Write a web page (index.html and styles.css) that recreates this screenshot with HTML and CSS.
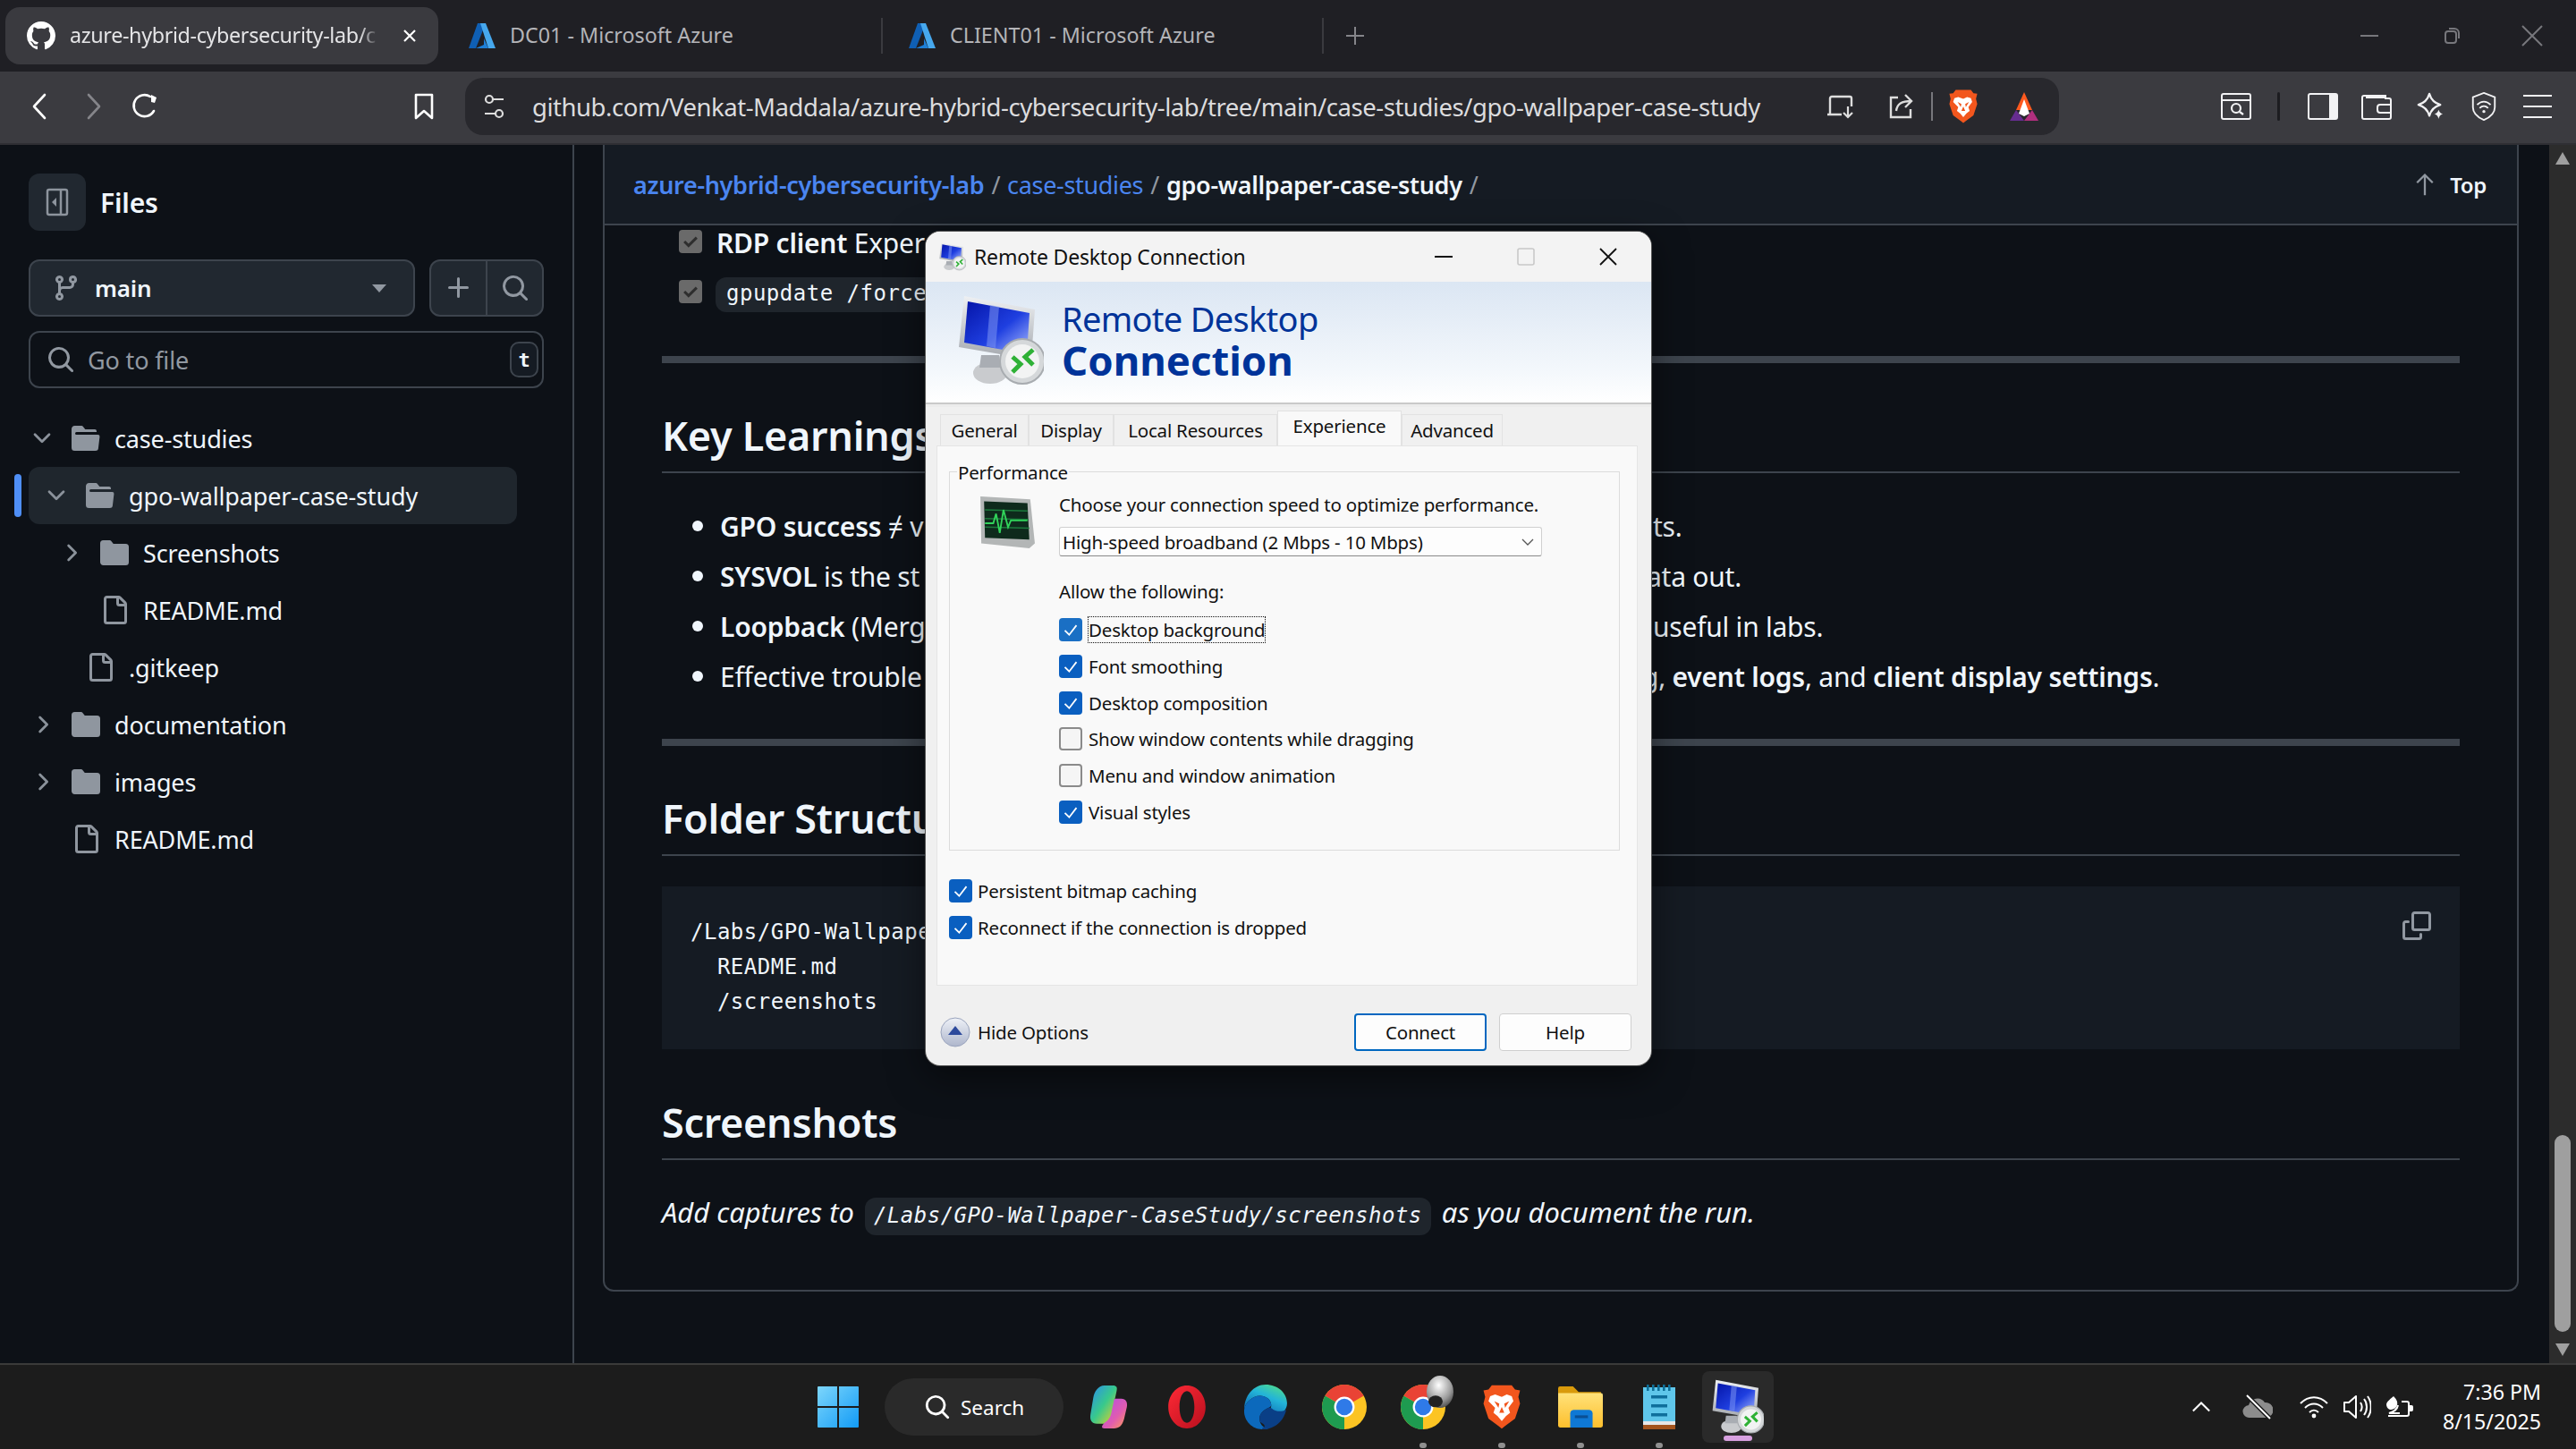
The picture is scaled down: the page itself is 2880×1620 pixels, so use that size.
FILE: index.html
```html
<!DOCTYPE html>
<html lang="en">

<head>
    <meta charset="UTF-8">
    <title>gpo-wallpaper-case-study</title>
    <link rel="stylesheet" href="styles.css">
</head>

<body>
    <svg class="sprite" xmlns="http://www.w3.org/2000/svg">
        <defs>
            <linearGradient id="g-win" x1="0" y1="0" x2="1" y2="1">
                <stop offset="0" stop-color="#7dd6fc"></stop>
                <stop offset="1" stop-color="#129bf5"></stop>
            </linearGradient>
            <linearGradient id="g-opera" x1="0" y1="0" x2="1" y2="1">
                <stop offset="0" stop-color="#ff2a36"></stop>
                <stop offset="1" stop-color="#b80f1e"></stop>
            </linearGradient>
            <linearGradient id="g-edge" x1="0.8" y1="0" x2="0.2" y2="1">
                <stop offset="0" stop-color="#4fdc8c"></stop>
                <stop offset="0.4" stop-color="#23b4d8"></stop>
                <stop offset="1" stop-color="#0b5fb0"></stop>
            </linearGradient>
            <linearGradient id="g-screen" x1="0" y1="0" x2="1" y2="1">
                <stop offset="0" stop-color="#0414a8"></stop>
                <stop offset="0.55" stop-color="#1f3fe0"></stop>
                <stop offset="1" stop-color="#aebfff"></stop>
            </linearGradient>
            <linearGradient id="g-frame" x1="0" y1="0" x2="0" y2="1">
                <stop offset="0" stop-color="#eef0f3"></stop>
                <stop offset="1" stop-color="#a4a8ae"></stop>
            </linearGradient>
            <linearGradient id="g-folder" x1="0" y1="0" x2="0" y2="1">
                <stop offset="0" stop-color="#ffe27a"></stop>
                <stop offset="1" stop-color="#fdbf2d"></stop>
            </linearGradient>
            <linearGradient id="g-copilot" x1="0" y1="0" x2="1" y2="1">
                <stop offset="0" stop-color="#2a8cf0"></stop>
                <stop offset="0.5" stop-color="#38c98c"></stop>
                <stop offset="1" stop-color="#f5d020"></stop>
            </linearGradient>
            <linearGradient id="g-copilot2" x1="0" y1="0" x2="1" y2="1">
                <stop offset="0" stop-color="#b04fe8"></stop>
                <stop offset="0.6" stop-color="#e05cb0"></stop>
                <stop offset="1" stop-color="#ffa050"></stop>
            </linearGradient>
            <radialGradient id="g-ball" cx="0.45" cy="0.3" r="0.8">
                <stop offset="0" stop-color="#fff"></stop>
                <stop offset="0.6" stop-color="#9a9a9a"></stop>
                <stop offset="1" stop-color="#333"></stop>
            </radialGradient>
            <linearGradient id="g-hide" x1="0" y1="0" x2="0" y2="1">
                <stop offset="0" stop-color="#eef1f7"></stop>
                <stop offset="1" stop-color="#aeb6cc"></stop>
            </linearGradient>

            <symbol id="i-github" viewBox="0 0 16 16"><path fill="#fff" d="M8 0c4.42 0 8 3.58 8 8a8.013 8.013 0 0 1-5.45 7.59c-.4.08-.55-.17-.55-.38 0-.27.01-1.13.01-2.2 0-.75-.25-1.23-.54-1.48 1.78-.2 3.65-.88 3.65-3.95 0-.88-.31-1.59-.82-2.15.08-.2.36-1.02-.08-2.12 0 0-.67-.22-2.2.82-.64-.18-1.32-.27-2-.27-.68 0-1.36.09-2 .27-1.53-1.03-2.2-.82-2.2-.82-.44 1.1-.16 1.92-.08 2.12-.51.56-.82 1.28-.82 2.15 0 3.06 1.86 3.75 3.64 3.95-.23.2-.44.55-.51 1.07-.46.21-1.61.55-2.33-.66-.15-.24-.6-.83-1.23-.82-.67.01-.27.38.01.53.34.19.73.9.82 1.13.16.45.68 1.31 2.69.94 0 .67.01 1.3.01 1.49 0 .21-.15.45-.55.38A7.995 7.995 0 0 1 0 8c0-4.42 3.58-8 8-8Z"></path></symbol>
            <symbol id="i-azure" viewBox="0 0 32 32"><path fill="#0f5fb4" d="M11 2h9L9 30H1z"></path><path fill="#46a8ee" d="M20 2l11 28h-8L14 2z"></path><path fill="#1e7fd6" d="M18 19l5 11H9l9-4z"></path></symbol>
            <symbol id="i-folder" viewBox="0 0 16 16"><path fill="currentColor" d="M1.75 1A1.75 1.75 0 0 0 0 2.75v10.5C0 14.216.784 15 1.75 15h12.5A1.75 1.75 0 0 0 16 13.25v-8.5A1.75 1.75 0 0 0 14.25 3H7.5a.25.25 0 0 1-.2-.1l-.9-1.2C6.07 1.26 5.55 1 5 1H1.75Z"></path></symbol>
            <symbol id="i-folder-open" viewBox="0 0 16 16"><path fill="currentColor" d="M.513 1.513A1.75 1.75 0 0 1 1.75 1h3.5c.55 0 1.07.26 1.4.7l.9 1.2a.25.25 0 0 0 .2.1H13a1 1 0 0 1 1 1v.5H2.75a.75.75 0 0 0 0 1.5h11.978a1 1 0 0 1 .994 1.117L15 13.25A1.75 1.75 0 0 1 13.25 15H1.75A1.75 1.75 0 0 1 0 13.25V2.75c0-.464.184-.91.513-1.237Z"></path></symbol>
            <symbol id="i-file" viewBox="0 0 16 16"><path fill="currentColor" d="M2 1.75C2 .784 2.784 0 3.75 0h6.586c.464 0 .909.184 1.237.513l2.914 2.914c.329.328.513.773.513 1.237v9.586A1.75 1.75 0 0 1 13.25 16h-9.5A1.75 1.75 0 0 1 2 14.25Zm1.75-.25a.25.25 0 0 0-.25.25v12.5c0 .138.112.25.25.25h9.5a.25.25 0 0 0 .25-.25V6h-2.75A1.75 1.75 0 0 1 9 4.25V1.5Zm6.75.062V4.25c0 .138.112.25.25.25h2.688l-.011-.013-2.914-2.914-.013-.011Z"></path></symbol>
            <symbol id="i-down" viewBox="0 0 16 16"><path fill="currentColor" d="M12.78 5.22a.749.749 0 0 1 0 1.06l-4.25 4.25a.749.749 0 0 1-1.06 0L3.22 6.28a.749.749 0 1 1 1.06-1.06L8 8.939l3.72-3.719a.749.749 0 0 1 1.06 0Z"></path></symbol>
            <symbol id="i-right" viewBox="0 0 16 16"><path fill="currentColor" d="M6.22 3.22a.75.75 0 0 1 1.06 0l4.25 4.25a.75.75 0 0 1 0 1.06l-4.25 4.25a.751.751 0 0 1-1.042-.018.751.751 0 0 1-.018-1.042L9.94 8 6.22 4.28a.75.75 0 0 1 0-1.06Z"></path></symbol>
            <symbol id="i-branch" viewBox="0 0 16 16"><path fill="currentColor" d="M9.5 3.25a2.25 2.25 0 1 1 3 2.122V6A2.5 2.5 0 0 1 10 8.5H6a1 1 0 0 0-1 1v1.128a2.251 2.251 0 1 1-1.5 0V5.372a2.25 2.25 0 1 1 1.5 0v1.836A2.493 2.493 0 0 1 6 7h4a1 1 0 0 0 1-1v-.628A2.25 2.25 0 0 1 9.5 3.25Zm-6 0a.75.75 0 1 0 1.5 0 .75.75 0 0 0-1.5 0Zm8.25-.75a.75.75 0 1 0 0 1.5.75.75 0 0 0 0-1.5ZM4.25 12a.75.75 0 1 0 0 1.5.75.75 0 0 0 0-1.5Z"></path></symbol>
            <symbol id="i-search" viewBox="0 0 16 16"><path fill="currentColor" d="M10.68 11.74a6 6 0 0 1-7.922-8.982 6 6 0 0 1 8.982 7.922l3.04 3.04a.749.749 0 0 1-.326 1.275.749.749 0 0 1-.734-.215ZM11.5 7a4.499 4.499 0 1 0-8.997 0A4.499 4.499 0 0 0 11.5 7Z"></path></symbol>
            <symbol id="i-plus" viewBox="0 0 16 16"><path fill="currentColor" d="M7.75 2a.75.75 0 0 1 .75.75V7h4.25a.75.75 0 0 1 0 1.5H8.5v4.25a.75.75 0 0 1-1.5 0V8.5H2.75a.75.75 0 0 1 0-1.5H7V2.75A.75.75 0 0 1 7.75 2Z"></path></symbol>
            <symbol id="i-copy" viewBox="0 0 16 16"><path fill="currentColor" d="M0 6.75C0 5.784.784 5 1.75 5h1.5a.75.75 0 0 1 0 1.5h-1.5a.25.25 0 0 0-.25.25v7.5c0 .138.112.25.25.25h7.5a.25.25 0 0 0 .25-.25v-1.5a.75.75 0 0 1 1.5 0v1.5A1.75 1.75 0 0 1 9.25 16h-7.5A1.75 1.75 0 0 1 0 14.25Z"></path><path fill="currentColor" d="M5 1.75C5 .784 5.784 0 6.75 0h7.5C15.216 0 16 .784 16 1.75v7.5A1.75 1.75 0 0 1 14.25 11h-7.5A1.75 1.75 0 0 1 5 9.25Zm1.75-.25a.25.25 0 0 0-.25.25v7.5c0 .138.112.25.25.25h7.5a.25.25 0 0 0 .25-.25v-7.5a.25.25 0 0 0-.25-.25Z"></path></symbol>
            <symbol id="i-panel" viewBox="0 0 32 32"><rect x="5" y="2" width="22" height="28" rx="2" fill="none" stroke="#8d949d" stroke-width="2.5"></rect><path d="M20 2v28" stroke="#8d949d" stroke-width="2.5"></path><path d="M15 11v10l-5-5z" fill="#8d949d"></path></symbol>

            <symbol id="i-brave" viewBox="0 0 48 56"><path fill="#f2561d" d="M12 2h24l4 5 6 1-2 8 2 8-6 18-12 9-4 3-4-3-12-9-6-18 2-8-2-8 6-1z"></path><path fill="#fff" d="M24 16l6-3 6 2 2 6-6 8 2 6-5 4-5 6-5-6-5-4 2-6-8-8 2-6 6-2z"></path><path fill="#f2561d" d="M15 21l6 3-1 5zM33 21l-6 3 1 5zM24 28l3 7h-6z"></path></symbol>
            <symbol id="i-bat" viewBox="0 0 36 32"><path fill="#ff5a1f" d="M18 0l9 20H9z"></path><path fill="#b12f7e" d="M27 20l7 12H18z"></path><path fill="#662d91" d="M9 20L2 32h16z"></path><path fill="#fff" d="M18 8l6 16-6 3-6-3z"></path></symbol>
            <symbol id="i-chrome" viewBox="0 0 48 48"><circle cx="24" cy="24" r="24" fill="#fcc423"></circle><path fill="#e94335" d="M24 24L3.2 12A24 24 0 0 1 44.8 12z"></path><path fill="#1e9b50" d="M24 24L3.2 12A24 24 0 0 0 24 48z"></path><circle cx="24" cy="24" r="11" fill="#fff"></circle><circle cx="24" cy="24" r="8.8" fill="#2f7ae8"></circle></symbol>
            <symbol id="i-rdp" viewBox="0 0 96 100"><ellipse cx="36" cy="86" rx="19" ry="12" fill="#c9cbce"></ellipse><path fill="#a9adb3" d="M26 66h20l2 14H24z"></path><path fill="url(#g-frame)" d="M7 0l79 15-4 56L1 57z"></path><path fill="url(#g-screen)" d="M11 6l69 13-3 46L7 52z"></path><path fill="#7c93f2" opacity="0.55" d="M36 10l10 2-4 46-10-2z"></path><circle cx="72" cy="73" r="25" fill="#d5d8da" stroke="#a8acb0" stroke-width="2"></circle><circle cx="72" cy="73" r="19" fill="#f2f3f3"></circle><path d="M61 68l9 8-9 9M84 60l-9 8 9 9" fill="none" stroke="#2fb136" stroke-width="5"></path></symbol>
        </defs>
    </svg>

    <div class="app">
        <div class="tabbar">
            <div class="tab tab-active">
                <svg class="tab-icon"><use href="#i-github"></use></svg>
                <span class="tab-title">azure-hybrid-cybersecurity-lab/c</span>
                <svg class="tab-close" viewBox="0 0 16 16"><path d="M2 2l12 12M14 2L2 14" stroke="#fff" stroke-width="2.2"></path></svg>
            </div>
            <div class="tab tab-dim">
                <svg class="tab-icon"><use href="#i-azure"></use></svg>
                <span class="tab-title">DC01 - Microsoft Azure</span>
            </div>
            <div class="tab tab-dim tab-last">
                <svg class="tab-icon"><use href="#i-azure"></use></svg>
                <span class="tab-title">CLIENT01 - Microsoft Azure</span>
            </div>
            <svg class="new-tab" viewBox="0 0 24 24"><path d="M12 2v20M2 12h20" stroke="#85858a" stroke-width="2"></path></svg>
            <div class="win-controls">
                <svg class="win-min" viewBox="0 0 20 20"><path d="M0 10h20" stroke="#77777c" stroke-width="2"></path></svg>
                <svg class="win-max" viewBox="0 0 20 20"><rect x="3" y="5" width="12" height="13" rx="3" fill="none" stroke="#77777c" stroke-width="2"></rect><path d="M7 2h6a5 5 0 0 1 5 5v6" fill="none" stroke="#77777c" stroke-width="2"></path></svg>
                <svg class="win-close" viewBox="0 0 24 24"><path d="M1 1l22 22M23 1L1 23" stroke="#77777c" stroke-width="2"></path></svg>
            </div>
        </div>

        <div class="toolbar">
            <div class="nav-btn nav-first"><svg viewBox="0 0 32 32"><path d="M21 3L9 16l12 13" fill="none" stroke="#fff" stroke-width="2.6" stroke-linecap="round" stroke-linejoin="round"></path></svg></div>
            <div class="nav-btn"><svg viewBox="0 0 32 32"><path d="M11 3l12 13-12 13" fill="none" stroke="#85858a" stroke-width="2.6" stroke-linecap="round" stroke-linejoin="round"></path></svg></div>
            <div class="nav-btn"><svg viewBox="0 0 32 32"><path d="M25 21a12 12 0 1 1-4-16" fill="none" stroke="#fff" stroke-width="2.6" stroke-linecap="round"></path><path d="M22 3v8l4 1 2-6z" fill="#fff"></path></svg></div>
            <div class="nav-btn nav-bookmark"><svg viewBox="0 0 32 32"><path d="M7 3h18v26l-9-8-9 8z" fill="none" stroke="#fff" stroke-width="2.6" stroke-linejoin="round"></path></svg></div>

            <div class="address">
                <svg class="addr-tune" viewBox="0 0 24 32"><circle cx="7" cy="8" r="4" fill="none" stroke="#ddd" stroke-width="2.2"></circle><path d="M11 8h12M2 24h12" stroke="#ddd" stroke-width="2.2"></path><circle cx="18" cy="24" r="4" fill="none" stroke="#ddd" stroke-width="2.2"></circle></svg>
                <span class="addr-url">github.com/Venkat-Maddala/azure-hybrid-cybersecurity-lab/tree/main/case-studies/gpo-wallpaper-case-study</span>
                <div class="addr-btn"><svg viewBox="0 0 32 32"><path d="M5 24V7a2 2 0 0 1 2-2h20a2 2 0 0 1 2 2v9M2 25h16" fill="none" stroke="#ddd" stroke-width="2.4"></path><path d="M25 16v12m-5-5l5 5 5-5" fill="none" stroke="#ddd" stroke-width="2.2"></path></svg></div>
                <div class="addr-btn"><svg viewBox="0 0 32 32"><path d="M13 6H5v22h22v-9" fill="none" stroke="#ddd" stroke-width="2.4"></path><path d="M11 21c1-8 6-11 17-11M21 3l7 7-7 7" fill="none" stroke="#ddd" stroke-width="2.4"></path></svg></div>
                <i class="addr-sep"></i>
                <div class="addr-btn"><svg class="addr-brave"><use href="#i-brave"></use></svg></div>
                <div class="addr-btn"><svg class="addr-bat"><use href="#i-bat"></use></svg></div>
            </div>

            <div class="tool-right">
                <div class="tool-btn"><svg viewBox="0 0 34 30"><rect x="1" y="1" width="32" height="28" rx="2" fill="none" stroke="#f2f2f4" stroke-width="2"></rect><path d="M1 8h32" stroke="#f2f2f4" stroke-width="2"></path><circle cx="17" cy="17" r="5" fill="none" stroke="#f2f2f4" stroke-width="2.2"></circle><path d="M21 21l4 3" stroke="#f2f2f4" stroke-width="2.2"></path></svg></div>
                <i class="tool-sep"></i>
                <div class="tool-btn"><svg viewBox="0 0 34 30"><rect x="1" y="1" width="32" height="28" rx="2" fill="none" stroke="#f2f2f4" stroke-width="2"></rect><path d="M24 1h9v28h-9z" fill="#f2f2f4"></path></svg></div>
                <div class="tool-btn"><svg viewBox="0 0 34 30"><path d="M5 5h22M3 3h24v3h4a2 2 0 0 1 2 2v19a2 2 0 0 1-2 2H3a2 2 0 0 1-2-2V5a2 2 0 0 1 2-2z" fill="none" stroke="#f2f2f4" stroke-width="2"></path><path d="M33 13H21a3 3 0 0 0-3 3v3a3 3 0 0 0 3 3h12" fill="none" stroke="#f2f2f4" stroke-width="2"></path></svg></div>
                <div class="tool-btn"><svg viewBox="0 0 34 34"><path d="M16 2c2 7 6 11 13 13-7 2-11 6-13 13-2-7-6-11-13-13 7-2 11-6 13-13z" fill="none" stroke="#f2f2f4" stroke-width="2.4" stroke-linejoin="round"></path><path d="M27 21c1 3 2 4 5 5-3 1-4 2-5 6-1-4-2-5-5-6 3-1 4-2 5-5z" fill="#f2f2f4"></path></svg></div>
                <div class="tool-btn"><svg viewBox="0 0 30 34"><path d="M15 1l13 5v12c0 7-6 12-13 15C8 30 2 25 2 18V6z" fill="none" stroke="#f2f2f4" stroke-width="2"></path><path d="M7 15c5-5 11-5 16 0M10 19c3-3 7-3 10 0" fill="none" stroke="#f2f2f4" stroke-width="2"></path><circle cx="15" cy="23" r="1.8" fill="#f2f2f4"></circle></svg></div>
                <div class="tool-btn"><svg viewBox="0 0 34 30"><path d="M1 3h32M1 15h32M1 27h32" stroke="#f2f2f4" stroke-width="2.2"></path></svg></div>
            </div>
        </div>

        <div class="main">
            <aside class="sidebar">
                <div class="side-head">
                    <div class="side-toggle"><svg><use href="#i-panel"></use></svg></div>
                    <span class="side-title">Files</span>
                </div>
                <div class="branch-row">
                    <div class="branch-btn">
                        <svg class="branch-icon"><use href="#i-branch"></use></svg>
                        <span class="branch-name">main</span>
                        <i class="caret"></i>
                    </div>
                    <div class="btn-group">
                        <div class="btn-cell"><svg><use href="#i-plus"></use></svg></div>
                        <div class="btn-cell"><svg><use href="#i-search"></use></svg></div>
                    </div>
                </div>
                <div class="file-find">
                    <svg><use href="#i-search"></use></svg>
                    <span class="find-text">Go to file</span>
                    <kbd class="find-key">t</kbd>
                </div>
                <div class="tree">
                    <div class="row">
                        <svg class="chev"><use href="#i-down"></use></svg>
                        <svg class="ico"><use href="#i-folder-open"></use></svg>
                        <span>case-studies</span>
                    </div>
                    <div class="row depth-1 row-current">
                        <svg class="chev"><use href="#i-down"></use></svg>
                        <svg class="ico"><use href="#i-folder-open"></use></svg>
                        <span>gpo-wallpaper-case-study</span>
                    </div>
                    <div class="row depth-2">
                        <svg class="chev"><use href="#i-right"></use></svg>
                        <svg class="ico"><use href="#i-folder"></use></svg>
                        <span>Screenshots</span>
                    </div>
                    <div class="row depth-2">
                        <i class="chev"></i>
                        <svg class="ico"><use href="#i-file"></use></svg>
                        <span>README.md</span>
                    </div>
                    <div class="row depth-1">
                        <i class="chev"></i>
                        <svg class="ico"><use href="#i-file"></use></svg>
                        <span>.gitkeep</span>
                    </div>
                    <div class="row">
                        <svg class="chev"><use href="#i-right"></use></svg>
                        <svg class="ico"><use href="#i-folder"></use></svg>
                        <span>documentation</span>
                    </div>
                    <div class="row">
                        <svg class="chev"><use href="#i-right"></use></svg>
                        <svg class="ico"><use href="#i-folder"></use></svg>
                        <span>images</span>
                    </div>
                    <div class="row">
                        <i class="chev"></i>
                        <svg class="ico"><use href="#i-file"></use></svg>
                        <span>README.md</span>
                    </div>
                </div>
            </aside>

            <section class="card">
                <div class="crumbs">
                    <a class="crumb-link">azure-hybrid-cybersecurity-lab</a>
                    <span class="crumb-sep">/</span>
                    <a class="crumb-link crumb-plain">case-studies</a>
                    <span class="crumb-sep">/</span>
                    <strong class="crumb-here">gpo-wallpaper-case-study</strong>
                    <span class="crumb-sep">/</span>
                    <div class="top-link">
                        <svg viewBox="0 0 16 16"><path d="M8 15V2M3 7l5-5 5 5" fill="none" stroke="#9198a1" stroke-width="1.3"></path></svg>
                        <span>Top</span>
                    </div>
                </div>

                <article class="markdown">
                    <div class="task task-first">
                        <i class="task-box"><svg viewBox="0 0 16 16"><path d="M3 8l3.4 3.4L13 4.8" fill="none" stroke="#2e2e2e" stroke-width="2.2"></path></svg></i>
                        <span><strong>RDP client</strong> Exper</span>
                    </div>
                    <div class="task task-second">
                        <i class="task-box"><svg viewBox="0 0 16 16"><path d="M3 8l3.4 3.4L13 4.8" fill="none" stroke="#2e2e2e" stroke-width="2.2"></path></svg></i>
                        <code class="pill">gpupdate /force</code>
                    </div>

                    <hr class="rule">
                    <h2>Key Learnings</h2>
                    <ul class="points">
                        <li>
                            <span class="head head-a"><strong>GPO success</strong> ≠ v</span>
                            <span>ts.</span>
                        </li>
                        <li>
                            <span class="head head-b"><strong>SYSVOL</strong> is the st</span>
                            <span>ata out.</span>
                        </li>
                        <li>
                            <span class="head head-a"><strong>Loopback</strong> (Merg</span>
                            <span>useful in labs.</span>
                        </li>
                        <li>
                            <span class="head head-c">Effective trouble</span>
                            <span>g, <strong>event logs</strong>, and <strong>client display settings</strong>.</span>
                        </li>
                    </ul>

                    <hr class="rule rule-second">
                    <h2>Folder Structu</h2>
                    <div class="codeblock">
                        <pre>/Labs/GPO-Wallpape
  README.md
  /screenshots</pre>
                        <svg class="copy"><use href="#i-copy"></use></svg>
                    </div>

                    <h2 class="h2-last">Screenshots</h2>
                    <p class="note"><em>Add captures to <code class="pill pill-em">/Labs/GPO-Wallpaper-CaseStudy/screenshots</code> as you document the run.</em></p>
                </article>
            </section>

            <div class="scrollbar">
                <i class="arrow-up"></i>
                <i class="thumb"></i>
                <i class="arrow-down"></i>
            </div>
        </div>

        <div class="taskbar">
            <svg class="start" viewBox="0 0 46 46"><path fill="url(#g-win)" d="M0 1a1 1 0 0 1 1-1h21v22H0zM24 0h21a1 1 0 0 1 1 1v21H24zM0 24h22v22H1a1 1 0 0 1-1-1zM24 24h22v21a1 1 0 0 1-1 1H24z"></path></svg>
            <div class="search-pill">
                <svg><use href="#i-search"></use></svg>
                <span>Search</span>
            </div>
            <div class="task-app">
                <svg viewBox="0 0 48 48"><path fill="url(#g-copilot)" d="M20 1h9c4 0 5 2 4 6l-6 28c-1 4-5 7-9 7h-6c-6 0-8-4-7-10l3-18C9 8 13 1 20 1z"></path><path fill="url(#g-copilot2)" d="M32 15h6c5 0 7 4 6 9l-3 13c-2 7-5 10-11 10H20c-4 0-3-3 0-6 6-4 7-8 8-14l2-9c0-2 1-3 2-3z"></path></svg>
            </div>
            <div class="task-app">
                <svg viewBox="0 0 48 48"><path fill="url(#g-opera)" fill-rule="evenodd" d="M24 1c11 0 20 10 20 23S35 47 24 47 4 37 4 24 13 1 24 1zm0 6c-5 0-8 8-8 17s3 17 8 17 8-8 8-17-3-17-8-17z"></path></svg>
            </div>
            <div class="task-app">
                <svg viewBox="0 0 48 48"><path fill="url(#g-edge)" d="M24 0c13 0 23 9 23 20 0 7-5 12-12 12-4 0-7-2-7-4 0-1 2-2 2-6 0-6-6-10-12-10C10 12 2 19 1 27 1 12 11 0 24 0z"></path><path fill="#0c69bc" d="M1 27c1-8 9-15 17-15 6 0 12 4 12 10 0 1-1 2-3 3-7 3-11 8-9 15 1 3 3 6 9 8-3 1-5 0-7 0C9 48 0 38 1 27z"></path><path fill="#0a3f86" d="M18 40c-2-7 2-12 9-15 3-1 4 2 8 3 3 1 7 1 11-1-2 11-12 21-25 21-1 0-1-1 0-2 3 0 3-3-3-6z"></path></svg>
            </div>
            <div class="task-app">
                <svg><use href="#i-chrome"></use></svg>
            </div>
            <div class="task-app task-open">
                <svg><use href="#i-chrome"></use></svg>
                <svg class="ball" viewBox="0 0 30 50" preserveAspectRatio="none"><ellipse cx="15" cy="25" rx="15" ry="25" fill="url(#g-ball)"></ellipse><ellipse cx="10" cy="40" rx="8" ry="9" fill="#222"></ellipse></svg>
            </div>
            <div class="task-app task-open">
                <svg class="brave-big"><use href="#i-brave"></use></svg>
            </div>
            <div class="task-app task-open">
                <svg viewBox="0 0 48 48"><path fill="#d99a0b" d="M0 4a2 2 0 0 1 2-2h14l6 6h24v8H0z"></path><path fill="url(#g-folder)" d="M0 9h46a2 2 0 0 1 2 2v33a2 2 0 0 1-2 2H2a2 2 0 0 1-2-2z"></path><path fill="#0f78d4" d="M13 46V31a4 4 0 0 1 4-4h16a4 4 0 0 1 4 4v15z"></path><path fill="#0a4f94" d="M18 33h14v3H18z"></path></svg>
            </div>
            <div class="task-app task-open">
                <svg viewBox="0 0 36 50"><path fill="#5fc6ea" d="M0 3h36v38H0z"></path><path fill="#0e6f98" d="M4 0h2.6v7H4zM10 0h2.6v7H10zM16 0h2.6v7H16zM22 0h2.6v7H22zM28 0h2.6v7H28z"></path><path fill="#0f6f9c" d="M9 12h18v3.5H9zM9 22h18v3.5H9zM9 32h18v3.5H9z"></path><path fill="#e7e7e7" d="M0 41h36v4H0z"></path><path fill="#a4541d" d="M0 45h36v5H0z"></path></svg>
            </div>
            <div class="task-app task-current">
                <svg><use href="#i-rdp"></use></svg>
            </div>

            <div class="tray">
                <svg class="tray-chev" viewBox="0 0 24 14"><path d="M2 12l10-10 10 10" fill="none" stroke="#fff" stroke-width="2.2"></path></svg>
                <svg class="tray-cloud" viewBox="0 0 34 28"><path fill="#8c8c8c" d="M8 26a7 7 0 0 1-1-14 10 10 0 0 1 18-3 8 8 0 0 1 2 17z"></path><path d="M5 1l26 26" stroke="#1c1c1c" stroke-width="5"></path><path d="M5 1l26 26" stroke="#fff" stroke-width="2"></path></svg>
                <svg class="tray-wifi" viewBox="0 0 32 26"><path d="M1 9c9-9 21-9 30 0M6 14c6-6 14-6 20 0M11 19c3-3 7-3 10 0" fill="none" stroke="#fff" stroke-width="2"></path><circle cx="16" cy="23" r="2.4" fill="#fff"></circle></svg>
                <svg class="tray-vol" viewBox="0 0 32 28"><path d="M2 9h5l8-7v24l-8-7H2z" fill="none" stroke="#fff" stroke-width="2" stroke-linejoin="round"></path><path d="M20 9c2 3 2 7 0 10M24 5c4 5 4 13 0 18M28 2c5 7 5 17 0 24" fill="none" stroke="#fff" stroke-width="2"></path></svg>
                <svg class="tray-bat" viewBox="0 0 32 26"><path d="M3 23h21a2 2 0 0 0 2-2V9a2 2 0 0 0-2-2h-6" fill="none" stroke="#fff" stroke-width="2"></path><path d="M27 11h2a2 2 0 0 1 2 2v3a2 2 0 0 1-2 2h-2z" fill="#fff"></path><path d="M9 1c3 3 5 6 4 10-1 3-4 5-8 5-3-1-4-4-4-6 1-4 5-6 8-9z" fill="#fff"></path><path d="M14 11c-1 5-4 7-10 9h12" fill="none" stroke="#fff" stroke-width="2"></path></svg>
                <div class="clock">
                    <span>7:36 PM</span>
                    <span>8/15/2025</span>
                </div>
            </div>
        </div>
    </div>

    <div class="dialog">
        <div class="dlg-title">
            <svg class="dlg-title-icon"><use href="#i-rdp"></use></svg>
            <span class="dlg-title-text">Remote Desktop Connection</span>
            <svg class="dlg-min" viewBox="0 0 20 20"><path d="M0 10h20" stroke="#111" stroke-width="2"></path></svg>
            <svg class="dlg-max" viewBox="0 0 20 20"><rect x="1" y="1" width="18" height="18" rx="2" fill="none" stroke="#c8c8c8" stroke-width="1.6"></rect></svg>
            <svg class="dlg-close" viewBox="0 0 20 20"><path d="M1 1l18 18M19 1L1 19" stroke="#111" stroke-width="1.8"></path></svg>
        </div>
        <div class="dlg-banner">
            <svg class="dlg-banner-icon"><use href="#i-rdp"></use></svg>
            <div class="dlg-banner-text">
                <div class="banner-light">Remote Desktop</div>
                <div class="banner-bold">Connection</div>
            </div>
        </div>
        <div class="dlg-body">
            <div class="dlg-tabs">
                <span class="dlg-tab tab-general">General</span>
                <span class="dlg-tab tab-display">Display</span>
                <span class="dlg-tab tab-local">Local Resources</span>
                <span class="dlg-tab dlg-tab-on">Experience</span>
                <span class="dlg-tab tab-advanced">Advanced</span>
            </div>
            <div class="dlg-panel">
                <div class="group">
                    <span class="group-label">Performance</span>
                    <svg class="perf-icon" viewBox="0 0 62 56" preserveAspectRatio="none"><path fill="#b3b6b6" d="M2 1l54 3 5 46-6 5L3 50z"></path><path fill="#0e2a1c" d="M6 6l47 2 2 38L7 44z"></path><path d="M7 15l46 1M7 24l47 1M7 33l48 1" stroke="#1c7a3c" stroke-width="1.4"></path><path d="M7 29h9l3-10 4 20 4-24 5 18 3-7h18" fill="none" stroke="#31d35a" stroke-width="1.8"></path></svg>
                    <div class="group-col">
                        <div class="dlg-line">Choose your connection speed to optimize performance.</div>
                        <div class="combo">
                            <span>High-speed broadband (2 Mbps - 10 Mbps)</span>
                            <svg viewBox="0 0 16 10"><path d="M2 2l6 6 6-6" fill="none" stroke="#555" stroke-width="1.3"></path></svg>
                        </div>
                        <div class="dlg-line allow">Allow the following:</div>
                        <div class="checks">
                            <div class="check"><i class="box box-focus"><svg viewBox="0 0 16 16"><path d="M4 8.5l3 3L12 5" fill="none" stroke="#fff" stroke-width="1.1"></path></svg></i><span class="focus">Desktop background</span></div>
                            <div class="check"><i class="box"><svg viewBox="0 0 16 16"><path d="M4 8.5l3 3L12 5" fill="none" stroke="#fff" stroke-width="1.1"></path></svg></i><span>Font smoothing</span></div>
                            <div class="check"><i class="box"><svg viewBox="0 0 16 16"><path d="M4 8.5l3 3L12 5" fill="none" stroke="#fff" stroke-width="1.1"></path></svg></i><span>Desktop composition</span></div>
                            <div class="check"><i class="box box-off"></i><span>Show window contents while dragging</span></div>
                            <div class="check"><i class="box box-off"></i><span>Menu and window animation</span></div>
                            <div class="check"><i class="box"><svg viewBox="0 0 16 16"><path d="M4 8.5l3 3L12 5" fill="none" stroke="#fff" stroke-width="1.1"></path></svg></i><span>Visual styles</span></div>
                        </div>
                    </div>
                </div>
                <div class="checks checks-low">
                    <div class="check"><i class="box"><svg viewBox="0 0 16 16"><path d="M4 8.5l3 3L12 5" fill="none" stroke="#fff" stroke-width="1.1"></path></svg></i><span>Persistent bitmap caching</span></div>
                    <div class="check"><i class="box"><svg viewBox="0 0 16 16"><path d="M4 8.5l3 3L12 5" fill="none" stroke="#fff" stroke-width="1.1"></path></svg></i><span>Reconnect if the connection is dropped</span></div>
                </div>
            </div>
            <div class="dlg-foot">
                <svg class="hide-icon" viewBox="0 0 34 34"><circle cx="17" cy="17" r="16" fill="url(#g-hide)" stroke="#9aa4bd"></circle><path d="M17 10l8 10H9z" fill="#2d4a9c"></path></svg>
                <span class="hide-text">Hide Options</span>
                <span class="dlg-btn dlg-btn-main">Connect</span>
                <span class="dlg-btn">Help</span>
            </div>
        </div>
    </div>
</body>

</html>
```

FILE: styles.css
```css
* {
    box-sizing: border-box;
}

html,
body {
    width: 2880px;
    height: 1620px;
    margin: 0;
    padding: 0;
    overflow: hidden;
    background: #0d1117;
    font-family: "Noto Sans", "Open Sans", sans-serif;
}

.sprite {
    position: absolute;
    width: 0;
    height: 0;
}

.app {
    display: flex;
    flex-direction: column;
    width: 2880px;
    height: 1620px;
}

/* browser chrome */
.tabbar {
    display: flex;
    align-items: center;
    height: 80px;
    background: #1f1f24;
    color: #b4b4b8;
    font-size: 23.3px;
}

.tab {
    display: flex;
    align-items: center;
    height: 64px;
}

.tab-title {
    padding-bottom: 2px;
}

.tab-active {
    width: 484px;
    margin-left: 6px;
    padding-left: 24px;
    background: #3a3a3f;
    border-radius: 16px;
    color: #e4e4e6;
}

.tab-active .tab-title {
    width: 345px;
    margin-left: 16px;
    letter-spacing: -.35px;
    white-space: nowrap;
    -webkit-mask-image: linear-gradient(90deg, #000 94%, transparent);
}

.tab-icon {
    width: 32px;
    height: 32px;
    flex: none;
}

.tab-close {
    width: 16px;
    height: 16px;
    margin-left: 27px;
}

.tab-dim {
    width: 497px;
    padding-left: 33px;
    border-right: 2px solid #3a3a3f;
    height: 40px;
}

.tab-last {
    width: 493px;
    padding-left: 28px;
}

.tab-dim .tab-title {
    margin-left: 15px;
}

.new-tab {
    width: 24px;
    height: 24px;
    margin-left: 23px;
}

.win-controls {
    display: flex;
    align-items: center;
    margin-left: auto;
    padding-right: 37px;
}

.win-min {
    width: 20px;
    height: 20px;
}

.win-max {
    width: 20px;
    height: 20px;
    margin-left: 72px;
}

.win-close {
    width: 24px;
    height: 24px;
    margin-left: 68px;
}

.toolbar {
    display: flex;
    align-items: center;
    height: 82px;
    padding-bottom: 2px;
    background: #3b3b40;
    border-bottom: 2px solid #2f2f34;
}

.nav-btn {
    display: flex;
    align-items: center;
    justify-content: center;
    width: 59px;
    height: 64px;
}

.nav-btn svg {
    width: 32px;
    height: 32px;
}

.nav-first {
    margin-left: 15px;
}

.nav-bookmark {
    margin-left: 252px;
}

.address {
    display: flex;
    align-items: center;
    width: 1782px;
    height: 64px;
    margin-left: 17px;
    padding: 0 5px 0 20px;
    background: #28282d;
    border-radius: 20px;
}

.addr-tune {
    width: 24px;
    height: 32px;
    flex: none;
}

.addr-url {
    flex: 1;
    margin-left: 31px;
    color: #dcdcde;
    font-size: 27.5px;
    letter-spacing: -.46px;
    white-space: nowrap;
}

.addr-btn {
    display: flex;
    align-items: center;
    justify-content: center;
    width: 68px;
    height: 64px;
}

.addr-btn svg {
    width: 32px;
    height: 32px;
}

.addr-btn .addr-brave {
    width: 34px;
    height: 40px;
}

.addr-btn .addr-bat {
    width: 36px;
    height: 32px;
}

.addr-sep {
    width: 2px;
    height: 32px;
    background: #77777c;
}

.tool-right {
    display: flex;
    align-items: center;
    margin-left: 168px;
}

.tool-btn {
    display: flex;
    align-items: center;
    justify-content: center;
    width: 60px;
    height: 64px;
}

.tool-btn svg {
    width: 34px;
    height: 32px;
}

.tool-sep {
    width: 3px;
    height: 32px;
    margin: 0 18px 0 16px;
    background: #1c1c20;
    border-radius: 2px;
}

/* main area */
.main {
    display: flex;
    flex: 1;
    min-height: 0;
    background: #0d1117;
}

.sidebar {
    width: 642px;
    flex: none;
    padding: 32px 0 0 32px;
    border-right: 2px solid #3d444d;
    color: #f0f6fc;
    font-size: 27px;
    letter-spacing: -.15px;
}

.side-head {
    display: flex;
    align-items: center;
    height: 64px;
}

.side-toggle {
    display: flex;
    align-items: center;
    justify-content: center;
    width: 64px;
    height: 64px;
    background: #212830;
    border-radius: 12px;
}

.side-toggle svg {
    width: 32px;
    height: 32px;
}

.side-title {
    margin-left: 16px;
    font-size: 30px;
    font-weight: 600;
}

.branch-row {
    display: flex;
    margin-top: 32px;
}

.branch-btn {
    display: flex;
    align-items: center;
    width: 432px;
    height: 64px;
    padding: 0 30px 0 24px;
    background: #212830;
    border: 2px solid #3d444d;
    border-radius: 12px;
}

.branch-icon {
    width: 32px;
    height: 32px;
    color: #9198a1;
}

.branch-name {
    margin-left: 16px;
    font-size: 26px;
    font-weight: 600;
}

.caret {
    width: 0;
    height: 0;
    margin-left: auto;
    border-left: 8px solid transparent;
    border-right: 8px solid transparent;
    border-top: 9px solid #9198a1;
}

.btn-group {
    display: flex;
    width: 128px;
    height: 64px;
    margin-left: 16px;
    background: #212830;
    border: 2px solid #3d444d;
    border-radius: 12px;
    color: #9198a1;
}

.btn-cell {
    display: flex;
    align-items: center;
    justify-content: center;
    flex: 1;
}

.btn-cell + .btn-cell {
    border-left: 2px solid #3d444d;
}

.btn-cell svg {
    width: 32px;
    height: 32px;
}

.file-find {
    display: flex;
    align-items: center;
    width: 576px;
    height: 64px;
    margin-top: 16px;
    padding: 0 4px 0 18px;
    border: 2px solid #3d444d;
    border-radius: 12px;
    color: #9198a1;
}

.file-find svg {
    width: 32px;
    height: 32px;
}

.find-text {
    margin-left: 14px;
}

.find-key {
    display: flex;
    align-items: center;
    justify-content: center;
    width: 32px;
    height: 40px;
    margin-left: auto;
    background: #151b23;
    border: 2px solid #3d444d;
    border-radius: 10px;
    color: #f0f6fc;
    font-family: "DejaVu Sans Mono", monospace;
    font-size: 22px;
    font-weight: 700;
}

.tree {
    width: 546px;
    margin-top: 24px;
}

.row {
    position: relative;
    display: flex;
    align-items: center;
    height: 64px;
    border-radius: 12px;
    white-space: nowrap;
}

.depth-1 {
    padding-left: 16px;
}

.depth-2 {
    padding-left: 32px;
}

.row-current {
    background: #1f262d;
}

.row-current::before {
    content: "";
    position: absolute;
    left: -16px;
    top: 8px;
    width: 8px;
    height: 48px;
    background: #4f8ff7;
    border-radius: 4px;
}

.chev {
    display: block;
    width: 30px;
    height: 32px;
    flex: none;
    color: #8b929b;
}

.ico {
    width: 32px;
    height: 32px;
    flex: none;
    margin: 0 16px 0 18px;
    color: #8f969f;
}

.card {
    width: 2142px;
    height: 1282px;
    flex: none;
    margin-left: 32px;
    background: #0d1117;
    border: 2px solid #3d444d;
    border-top: 0;
    border-radius: 0 0 12px 12px;
    color: #f0f6fc;
    font-size: 30px;
    letter-spacing: -.23px;
}

.crumbs {
    display: flex;
    align-items: center;
    height: 90px;
    padding: 0 34px 0 32px;
    background: #151b23;
    border-bottom: 2px solid #3d444d;
    font-size: 27px;
    letter-spacing: -.33px;
    white-space: nowrap;
}

.crumb-link {
    color: #4a85f0;
    font-weight: 600;
}

.crumb-plain {
    font-weight: 400;
}

.crumb-sep {
    margin: 0 8px;
    color: #9198a1;
}

.crumb-here {
    font-weight: 600;
}

.top-link {
    display: flex;
    align-items: center;
    margin-left: auto;
    font-size: 24px;
    font-weight: 600;
}

.top-link svg {
    width: 28px;
    height: 28px;
    margin-right: 14px;
}

.markdown {
    padding: 0 64px;
}

.task {
    display: flex;
    align-items: center;
    padding-left: 19px;
}

.task-first {
    height: 38px;
}

.task-first .task-box {
    margin-bottom: 3px;
}

.task-second {
    height: 42px;
    margin-top: 18px;
}

.task-second .task-box {
    margin-bottom: 6px;
}

.task-box {
    display: block;
    width: 26px;
    height: 26px;
    margin-right: 15px;
    padding: 2px;
    background: #6a6a6a;
    border-radius: 4px;
}

.task-box svg {
    display: block;
    width: 22px;
    height: 22px;
}

strong {
    font-weight: 600;
}

.task span {
    margin-left: 1px;
    white-space: nowrap;
}

.pill {
    padding: 4px 12px 7px;
    background: #1f252c;
    border-radius: 12px;
    font-family: "DejaVu Sans Mono", monospace;
    font-size: 24px;
    letter-spacing: .5px;
    white-space: nowrap;
}

.rule {
    height: 8px;
    margin: 48px 0 0;
    background: #3d444d;
    border: 0;
}

.rule-second {
    margin-top: 46px;
}

h2 {
    margin: 51px 0 0;
    padding-bottom: 10px;
    border-bottom: 2px solid #3d444d;
    font-size: 45px;
    font-weight: 600;
    letter-spacing: -.3px;
    line-height: 60px;
}

.points {
    margin: 35px 0 0;
    padding: 0 0 0 34px;
    list-style: none;
}

.points li {
    display: flex;
    align-items: center;
    height: 48px;
    white-space: pre;
}

.points li + li {
    margin-top: 8px;
}

.points li::before {
    content: "";
    width: 12px;
    height: 12px;
    flex: none;
    margin-right: 19px;
    background: #f0f6fc;
    border-radius: 50%;
}

.head {
    flex: none;
    overflow: hidden;
}

.head-a {
    width: 1043px;
}

.head-b {
    width: 1036px;
}

.head-c {
    width: 1031px;
}

.codeblock {
    position: relative;
    height: 182px;
    margin-top: 34px;
    padding: 32px;
    background: #151b23;
}

.codeblock pre {
    margin: 0;
    font-family: "DejaVu Sans Mono", monospace;
    font-size: 24px;
    line-height: 39px;
    letter-spacing: .5px;
}

.copy {
    position: absolute;
    top: 28px;
    right: 32px;
    width: 32px;
    height: 32px;
    color: #9198a1;
}

.h2-last {
    margin-top: 52px;
}

.note {
    margin: 34px 0 0;
    font-size: 30.9px;
    letter-spacing: 0;
    line-height: 48px;
    white-space: nowrap;
}

.pill-em {
    margin: 0 4px;
    padding: 6px 10px 8px;
    letter-spacing: .5px;
}

/* page scrollbar */
.scrollbar {
    display: flex;
    flex-direction: column;
    align-items: center;
    width: 30px;
    margin-left: auto;
    padding: 8px 0;
    background: #2c2c2c;
}

.arrow-up {
    width: 0;
    height: 0;
    border-left: 8px solid transparent;
    border-right: 8px solid transparent;
    border-bottom: 14px solid #9f9f9f;
}

.arrow-down {
    width: 0;
    height: 0;
    margin-top: 13px;
    border-left: 8px solid transparent;
    border-right: 8px solid transparent;
    border-top: 14px solid #9f9f9f;
}

.thumb {
    width: 18px;
    height: 220px;
    margin-top: auto;
    background: #9f9f9f;
    border-radius: 9px;
}

/* windows taskbar */
.taskbar {
    display: flex;
    align-items: center;
    height: 96px;
    flex: none;
    padding-left: 914px;
    background: #1c1c1c;
    border-top: 2px solid #3a3a3a;
}

.start {
    width: 46px;
    height: 46px;
    flex: none;
}

.search-pill {
    display: flex;
    align-items: center;
    width: 200px;
    height: 64px;
    margin-left: 29px;
    padding-left: 44px;
    background: #2a2a2a;
    border-radius: 32px;
    color: #fff;
    font-size: 22.5px;
}

.search-pill svg {
    width: 30px;
    height: 30px;
    margin-right: 11px;
}

.task-app {
    position: relative;
    display: flex;
    align-items: center;
    justify-content: center;
    width: 88px;
    height: 80px;
    flex: none;
}

.search-pill + .task-app {
    margin-left: 6px;
}

.task-app svg {
    width: 50px;
    height: 50px;
}

.task-open::after {
    content: "";
    position: absolute;
    bottom: -6px;
    left: 40px;
    width: 8px;
    height: 6px;
    background: #8f8f8f;
    border-radius: 3px;
}

.task-app .ball {
    position: absolute;
    top: 5px;
    left: 48px;
    width: 30px;
    height: 36px;
}

.task-app .brave-big {
    width: 46px;
    height: 52px;
}

.task-current {
    width: 80px;
    margin-left: 4px;
    background: #2a2a2a;
    border-radius: 8px;
}

.task-current svg {
    width: 58px;
    height: 62px;
}

.task-current::after {
    content: "";
    position: absolute;
    bottom: 2px;
    left: 24px;
    width: 32px;
    height: 6px;
    background: #d8a0e0;
    border-radius: 3px;
}

.tray {
    display: flex;
    align-items: center;
    margin-left: auto;
    padding-right: 39px;
}

.tray-chev {
    width: 22px;
    height: 14px;
}

.tray-cloud {
    width: 34px;
    height: 28px;
    margin-left: 35px;
}

.tray-wifi {
    width: 32px;
    height: 26px;
    margin-left: 30px;
}

.tray-vol {
    width: 32px;
    height: 28px;
    margin-left: 16px;
}

.tray-bat {
    width: 32px;
    height: 26px;
    margin-left: 16px;
}

.clock {
    display: flex;
    flex-direction: column;
    align-items: flex-end;
    margin-left: 32px;
    color: #fff;
    font-size: 23.2px;
    line-height: 33px;
}

/* remote desktop window, free on the desktop */
.dialog {
    position: absolute;
    left: 1035px;
    top: 259px;
    width: 811px;
    height: 932px;
    overflow: hidden;
    background: #f0f0f0;
    border-radius: 16px;
    box-shadow: 0 0 0 1px #555, 0 12px 40px rgba(0, 0, 0, .5);
    color: #111;
    font-size: 20.5px;
    letter-spacing: -.2px;
}

.dlg-title {
    display: flex;
    align-items: center;
    height: 56px;
    padding-left: 15px;
    background: #f3f3f3;
    font-size: 23px;
    letter-spacing: -.2px;
}

.dlg-title-icon {
    width: 30px;
    height: 32px;
}

.dlg-title-text {
    margin-left: 9px;
}

.dlg-min {
    width: 20px;
    height: 20px;
    margin-left: auto;
}

.dlg-max {
    width: 20px;
    height: 20px;
    margin-left: 72px;
}

.dlg-close {
    width: 20px;
    height: 20px;
    margin: 0 38px 0 72px;
}

.dlg-banner {
    display: flex;
    align-items: center;
    height: 135px;
    padding: 0 0 4px 36px;
    background: linear-gradient(#dbe6f3, #f4f8fc 75%, #fff);
}

.dlg-banner-icon {
    width: 96px;
    height: 100px;
}

.dlg-banner-text {
    margin: 0 0 4px 20px;
    color: #003399;
}

.banner-light {
    font-size: 38px;
    letter-spacing: -.7px;
    line-height: 46px;
}

.banner-bold {
    font-size: 45.5px;
    font-weight: 700;
    letter-spacing: 0;
    line-height: 46px;
}

.dlg-body {
    height: 741px;
    padding-top: 11px;
    border-top: 2px solid #c9c9c9;
    box-shadow: inset 0 3px 0 #ececec;
}

.dlg-tabs {
    display: flex;
    align-items: flex-end;
    height: 35px;
    padding-left: 16px;
}

.dlg-tab {
    display: flex;
    align-items: center;
    justify-content: center;
    height: 35px;
    background: #f0f0f0;
    border: 1px solid #e2e2e2;
    border-bottom: 0;
}

.tab-general {
    width: 99px;
}

.tab-display {
    width: 95px;
}

.tab-local {
    width: 183px;
}

.tab-advanced {
    width: 113px;
}

.dlg-tab-on {
    width: 139px;
    height: 39px;
    padding-bottom: 6px;
    background: #f9f9f9;
}

.dlg-panel {
    height: 604px;
    margin: 0 15px 0 12px;
    padding: 28px 19px 0 13px;
    background: #f9f9f9;
    border: 1px solid #e5e5e5;
}

.group {
    position: relative;
    display: flex;
    width: 750px;
    height: 424px;
    padding: 21px 0 0 32px;
    border: 1px solid #dcdcdc;
}

.group-label {
    position: absolute;
    left: 8px;
    top: -15px;
    padding: 0 1px;
    background: #f9f9f9;
    line-height: 30px;
}

.perf-icon {
    width: 64px;
    height: 60px;
    flex: none;
    margin-top: 5px;
}

.group-col {
    margin-left: 26px;
}

.dlg-line {
    line-height: 30px;
    white-space: nowrap;
}

.combo {
    display: flex;
    align-items: center;
    justify-content: space-between;
    width: 540px;
    height: 33px;
    margin-top: 10px;
    padding: 0 7px 0 3px;
    background: #fdfdfd;
    border: 1px solid #d0d0d0;
    border-bottom-color: #8a8a8a;
    border-radius: 3px;
}

.combo svg {
    width: 16px;
    height: 10px;
}

.allow {
    margin-top: 24px;
}

.checks {
    display: flex;
    flex-direction: column;
    gap: 14.8px;
    margin-top: 15px;
}

.checks-low {
    margin-top: 32px;
}

.check {
    display: flex;
    align-items: center;
    height: 26px;
    white-space: nowrap;
}

.box {
    display: block;
    width: 26px;
    height: 26px;
    flex: none;
    margin-right: 7px;
    background: #0a5fc0;
    border-radius: 4px;
}

.box svg {
    display: block;
    width: 26px;
    height: 26px;
}

.box-focus {
    background: #1a6fc4;
}

.box-off {
    background: #f5f5f5;
    border: 2px solid #8a8a8a;
}

.focus {
    outline: 1px dotted #111;
    outline-offset: 0;
}

.checks-low .box {
    margin-right: 6px;
}

.dlg-foot {
    display: flex;
    align-items: center;
    height: 42px;
    margin-top: 31px;
    padding: 0 22px 0 16px;
}

.hide-icon {
    width: 34px;
    height: 34px;
}

.hide-text {
    margin-left: 8px;
}

.dlg-btn {
    display: flex;
    align-items: center;
    justify-content: center;
    width: 148px;
    height: 42px;
    margin-left: 14px;
    background: #fdfdfd;
    border: 1px solid #cfcfcf;
    border-radius: 4px;
}

.dlg-btn-main {
    margin-left: auto;
    border: 2px solid #0067c0;
}
```
